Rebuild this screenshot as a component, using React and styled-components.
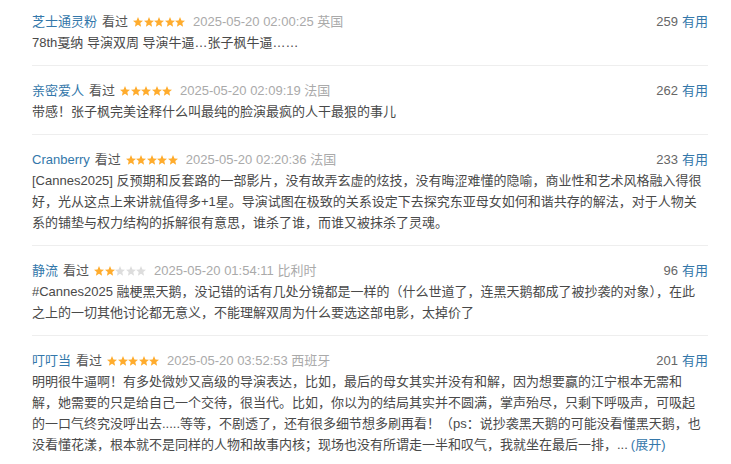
import React from "react";
import styled, { createGlobalStyle } from "styled-components";

const GlobalStyle = createGlobalStyle`
  body {
    margin: 0;
    background: #fff;
    font-family: "Liberation Sans", Arial, "Noto Sans CJK SC", sans-serif;
  }
`;

const StyledList = styled.div`
  width: 676px;
  margin-left: 32px;
  margin-top: -3px;
`;

const StyledItem = styled.div`
  padding: 14px 0 12px;
  border-bottom: 1px solid #eee;
  &:last-child {
    border-bottom: none;
  }
`;

const StyledHeader = styled.div`
  display: flex;
  align-items: center;
  height: 21px;
  font-size: 13px;
  line-height: 21px;
`;

const StyledInfo = styled.div`
  flex: 1;
  display: flex;
  align-items: center;
  white-space: nowrap;
`;

const StyledName = styled.a`
  color: #37a;
  text-decoration: none;
  margin-right: 5px;
`;

const StyledStatus = styled.span`
  color: #555;
  margin-right: 5px;
`;

const StyledStars = styled.span`
  display: inline-flex;
  gap: 0.5px;
  margin-right: 8px;
`;

const StyledTime = styled.span`
  color: #aaa;
`;

const StyledVotes = styled.span`
  color: #666;
  white-space: nowrap;
`;

const StyledUseful = styled.a`
  color: #37a;
  margin-left: 4px;
`;

const StyledText = styled.p`
  margin: 0;
  padding-right: 4px;
  font-size: 13px;
  line-height: 21px;
  color: #494949;
  word-break: break-all;
`;

const StyledMore = styled.a`
  color: #37a;
  margin-left: 3px;
`;

const Star = ({ on }) => (
  <svg width="10" height="10" viewBox="1.3 1.5 21.4 21">
    <path
      d="M12 1.5l3.1 7.1 7.6.7-5.8 5.1 1.7 7.5L12 17.9l-6.6 4 1.7-7.5L1.3 9.3l7.6-.7z"
      fill={on ? "#ffac2d" : "#ddd"}
    />
  </svg>
);

const comments = [
  {
    name: "芝士通灵粉",
    stars: 5,
    time: "2025-05-20 02:00:25 英国",
    votes: 259,
    text: "78th戛纳 导演双周 导演牛逼…张子枫牛逼……",
  },
  {
    name: "亲密爱人",
    stars: 5,
    time: "2025-05-20 02:09:19 法国",
    votes: 262,
    text: "带感！张子枫完美诠释什么叫最纯的脸演最疯的人干最狠的事儿",
  },
  {
    name: "Cranberry",
    stars: 5,
    time: "2025-05-20 02:20:36 法国",
    votes: 233,
    text:
      "[Cannes2025] 反预期和反套路的一部影片，没有故弄玄虚的炫技，没有晦涩难懂的隐喻，商业性和艺术风格融入得很好，光从这点上来讲就值得多+1星。导演试图在极致的关系设定下去探究东亚母女如何和谐共存的解法，对于人物关系的铺垫与权力结构的拆解很有意思，谁杀了谁，而谁又被抹杀了灵魂。",
  },
  {
    name: "静流",
    stars: 2,
    time: "2025-05-20 01:54:11 比利时",
    votes: 96,
    text:
      "#Cannes2025 融梗黑天鹅，没记错的话有几处分镜都是一样的（什么世道了，连黑天鹅都成了被抄袭的对象），在此之上的一切其他讨论都无意义，不能理解双周为什么要选这部电影，太掉价了",
  },
  {
    name: "叮叮当",
    stars: 5,
    time: "2025-05-20 03:52:53 西班牙",
    votes: 201,
    text:
      "明明很牛逼啊！有多处微妙又高级的导演表达，比如，最后的母女其实并没有和解，因为想要赢的江宁根本无需和解，她需要的只是给自己一个交待，很当代。比如，你以为的结局其实并不圆满，掌声殆尽，只剩下呼吸声，可吸起的一口气终究没呼出去.....等等，不剧透了，还有很多细节想多刷再看！（ps：说抄袭黑天鹅的可能没看懂黑天鹅，也没看懂花漾，根本就不是同样的人物和故事内核；现场也没有所谓走一半和叹气，我就坐在最后一排，...",
    more: true,
  },
];

const App = () => (
  <>
    <GlobalStyle />
    <StyledList>
      {comments.map(c => (
        <StyledItem key={c.name}>
          <StyledHeader>
            <StyledInfo>
              <StyledName>{c.name}</StyledName>
              <StyledStatus>看过</StyledStatus>
              <StyledStars>
                {[1, 2, 3, 4, 5].map(i => (
                  <Star key={i} on={i <= c.stars} />
                ))}
              </StyledStars>
              <StyledTime>{c.time}</StyledTime>
            </StyledInfo>
            <StyledVotes>
              {c.votes}
              <StyledUseful>有用</StyledUseful>
            </StyledVotes>
          </StyledHeader>
          <StyledText>
            {c.text}
            {c.more && <StyledMore>(展开)</StyledMore>}
          </StyledText>
        </StyledItem>
      ))}
    </StyledList>
  </>
);

export default App;
